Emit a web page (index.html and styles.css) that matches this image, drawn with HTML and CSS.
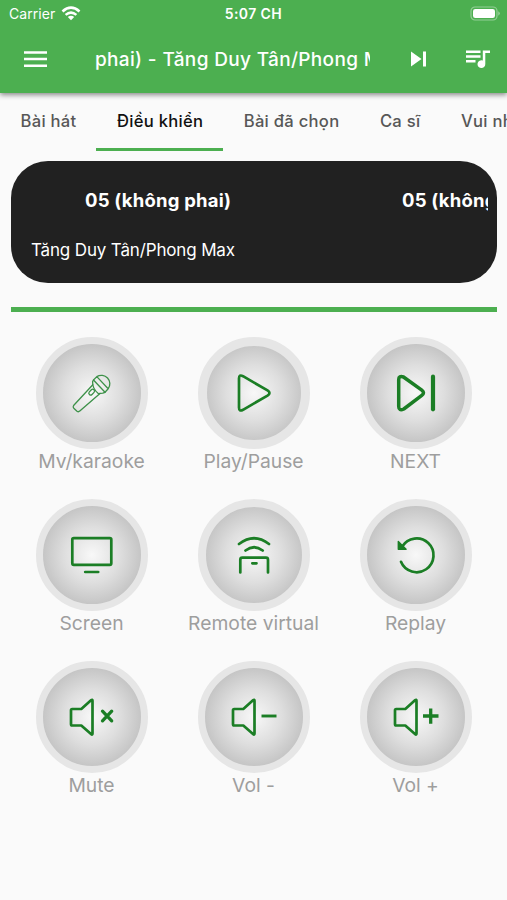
FILE: index.html
```
<!DOCTYPE html>
<html lang="vi">
<head>
    <meta charset="UTF-8">
    <title>Karaoke</title>
    <link rel="stylesheet" href="styles.css">
</head>
<body>
    <header class="header">
        <div class="status">
            <div class="carrier">
                <span>Carrier</span>
                <svg width="20" height="15" viewBox="0 0 20 15">
                    <path d="M1.5 5.4Q10 -2 18.5 5.4" fill="none" stroke="#fff" stroke-width="2.7"/>
                    <path d="M4.6 8.9Q10 4.3 15.4 8.9" fill="none" stroke="#fff" stroke-width="2.5"/>
                    <path d="M6.8 11Q10 8.4 13.2 11L10 14.3Z" fill="#fff"/>
                </svg>
            </div>
            <div class="clock">5:07 CH</div>
            <svg class="battery" width="31" height="15" viewBox="0 0 31 15">
                <rect x="1" y="1" width="26" height="13" rx="4" fill="none" stroke="#fff" stroke-opacity=".4" stroke-width="1.2"/>
                <rect x="3" y="3" width="22" height="9" rx="2.3" fill="#fff"/>
                <path d="M28.3 5.3Q31.3 7.5 28.3 9.7Z" fill="#fff" fill-opacity=".45"/>
            </svg>
        </div>
        <div class="toolbar">
            <svg class="menu" width="24" height="18" viewBox="0 0 24 18">
                <path d="M0 2.4H23M0 9H23M0 15.7H23" stroke="#fff" stroke-width="2.5"/>
            </svg>
            <div class="title">phai) - Tăng Duy Tân/Phong Max</div>
            <svg class="skip" width="18" height="18" viewBox="0 0 18 18">
                <path d="M1 1.6V16.4L11.5 9ZM13 1.6H16V16.4H13Z" fill="#fff"/>
            </svg>
            <svg class="queue" width="26" height="20" viewBox="0 0 26 20">
                <path d="M1 2.7H15.5M1 7.5H15.5M1 12.2H10.5" stroke="#fff" stroke-width="2.4"/>
                <path d="M17.8 1.4H25V3.9H20.3V15A3.9 3.9 0 1 1 17.8 11.5Z" fill="#fff"/>
            </svg>
        </div>
    </header>

    <nav class="tabs">
        <a class="tab">Bài hát</a>
        <a class="tab active">Điều khiển</a>
        <a class="tab">Bài đã chọn</a>
        <a class="tab">Ca sĩ</a>
        <a class="tab">Vui nhộn</a>
    </nav>

    <section class="now-playing">
        <div class="song"><span>05 (không phai)</span><span>05 (không phai)</span></div>
        <div class="artist">Tăng Duy Tân/Phong Max</div>
    </section>
    <div class="progress"></div>

    <main class="remote">
        <div class="control">
            <div class="button">
                <svg class="thin" viewBox="0 0 112 112">
                    <path d="M56.8 47.7L37.6 68.5Q36.6 70 37.8 71.2L41 74.2Q42.4 75.3 43.8 74.1L64 56.5"/>
                    <path d="M57.5 43L56.6 44.6Q56.2 51.5 62.5 56.7L66.8 56.2L69 55.3"/>
                    <path d="M57.5 43L60.8 39.6A8.5 8.5 0 0 1 72.2 51.8L69 55.3ZM60.8 39.6L72.2 51.8"/>
                    <rect x="52.5" y="53.3" width="6.5" height="3.7" rx="1.8" transform="rotate(-46 55.7 55.2)"/>
                </svg>
            </div>
            <p>Mv/karaoke</p>
        </div>
        <div class="control">
            <div class="button small">
                <svg viewBox="0 0 112 112">
                    <path d="M41 41.5Q41 37 45 39.2L69.5 53.4Q73.5 56 69.5 58.6L45 72.8Q41 75 41 70.5Z"/>
                </svg>
            </div>
            <p>Play/Pause</p>
        </div>
        <div class="control">
            <div class="button">
                <svg class="thick" viewBox="0 0 112 112">
                    <path d="M38.7 42.5Q38.7 38.5 43.5 40L61.8 53.2Q65.2 55.8 61.8 58.4L43.8 72Q38.7 74.2 38.7 69.5Z"/>
                    <path class="bar" d="M73 39.7V72.3"/>
                </svg>
            </div>
            <p>NEXT</p>
        </div>

        <div class="control">
            <div class="button">
                <svg viewBox="0 0 112 112">
                    <rect x="36.3" y="39.2" width="39" height="26.6" rx="1.5"/>
                    <path d="M49.2 73H62.2"/>
                </svg>
            </div>
            <p>Screen</p>
        </div>
        <div class="control">
            <div class="button medium">
                <svg viewBox="0 0 112 112">
                    <path d="M41 45Q56 33.5 71 45M47.5 51.5Q56 45 64.7 51.5"/>
                    <path d="M42.3 73.5V60.7Q42.3 58.7 44.3 58.7H68Q70 58.7 70 60.7V73.5M54.3 64.3H58.5"/>
                </svg>
            </div>
            <p>Remote virtual</p>
        </div>
        <div class="control">
            <div class="button">
                <svg viewBox="0 0 112 112">
                    <path d="M42.2 47.5A16.9 16.9 0 1 1 41 62.8"/>
                    <path class="fill" d="M38.3 42.5V50.3H46.1Z"/>
                </svg>
            </div>
            <p>Replay</p>
        </div>

        <div class="control">
            <div class="button">
                <svg viewBox="0 0 112 112">
                    <path d="M35 49.2Q35 48 36.2 48H45.3L55 39.3Q56.5 38 56.5 39.8V72.5Q56.5 74.3 55 73L45.3 64.5H36.2Q35 64.5 35 63.3Z"/>
                    <path class="cross" d="M66.5 50.2L75.7 59.8M75.7 50.2L66.5 59.8"/>
                </svg>
            </div>
            <p>Mute</p>
        </div>
        <div class="control">
            <div class="button">
                <svg viewBox="0 0 112 112">
                    <path d="M35 49.2Q35 48 36.2 48H45.3L55 39.3Q56.5 38 56.5 39.8V72.5Q56.5 74.3 55 73L45.3 64.5H36.2Q35 64.5 35 63.3Z"/>
                    <path class="flat" d="M63.5 55H78.5"/>
                </svg>
            </div>
            <p>Vol -</p>
        </div>
        <div class="control">
            <div class="button">
                <svg viewBox="0 0 112 112">
                    <path d="M35 49.2Q35 48 36.2 48H45.3L55 39.3Q56.5 38 56.5 39.8V72.5Q56.5 74.3 55 73L45.3 64.5H36.2Q35 64.5 35 63.3Z"/>
                    <path class="flat plus" d="M63 55H78.5M70.7 47.5V62.7"/>
                </svg>
            </div>
            <p>Vol +</p>
        </div>
    </main>
</body>
</html>
```

FILE: styles.css
```
* {
    box-sizing: border-box;
}
body {
    margin: 0;
    height: 900px;
    overflow: hidden;
    background-color: #fafafa;
    font-family: 'Inter', 'Roboto', sans-serif;
}
.header {
    position: relative;
    height: 93px;
    background-color: #4caf50;
    color: white;
    box-shadow: 0 2px 5px rgba(0, 0, 0, 0.45);
}
.status {
    display: grid;
    grid-template-columns: 1fr auto 1fr;
    align-items: center;
    height: 27px;
    padding: 0 6px 0 9px;
    font-size: 14px;
}
.carrier {
    display: flex;
    align-items: center;
    gap: 6px;
    letter-spacing: 0.05px;
}
.clock {
    margin-left: -3px;
    font-weight: 600;
    letter-spacing: 0.4px;
}
.battery {
    justify-self: end;
}
.toolbar {
    display: flex;
    align-items: center;
    height: 64px;
    padding-left: 24px;
}
.title {
    width: 275px;
    margin-left: 47px;
    overflow: hidden;
    white-space: nowrap;
    font-size: 19px;
    font-weight: 500;
    letter-spacing: 0.34px;
}
.skip {
    margin-left: 40px;
}
.queue {
    margin-left: 37px;
}
.tabs {
    display: flex;
    height: 58px;
    overflow: hidden;
}
.tab {
    flex-shrink: 0;
    padding: 16px 20px 0 20.5px;
    border-bottom: 3px solid transparent;
    white-space: nowrap;
    font-size: 16.6px;
    font-weight: 500;
    line-height: 24px;
    letter-spacing: 0.28px;
    color: #575757;
}
.tab.active {
    color: #111;
    border-color: #4caf50;
}
.now-playing {
    height: 122px;
    margin: 10px 10px 0 11px;
    padding: 25px 9px 0 20px;
    border-radius: 37px;
    background-color: #212121;
    color: white;
}
.song {
    display: flex;
    gap: 171px;
    padding-left: 54px;
    overflow: hidden;
    white-space: nowrap;
    font-size: 18.5px;
    font-weight: 700;
    line-height: 28px;
    letter-spacing: 0.2px;
}
.artist {
    margin-top: 24px;
    font-size: 17px;
    line-height: 24px;
    letter-spacing: -0.15px;
}
.progress {
    height: 5px;
    margin: 24px 10px 0 11px;
    background-color: #4caf50;
}
.remote {
    display: grid;
    grid-template-columns: repeat(3, 162px);
    grid-auto-rows: 162px;
    margin: 25px 0 0 11px;
}
.control {
    display: flex;
    flex-direction: column;
    align-items: center;
}
.control p {
    margin: 0 1px 0 0;
    font-size: 19.3px;
    line-height: 24px;
    color: #9e9e9e;
    white-space: nowrap;
}
.button {
    width: 112px;
    height: 112px;
    border: 7px solid #e6e6e6;
    border-radius: 50%;
    background: radial-gradient(circle closest-side, #f8f8f8, #dedede 50%, #bdbdbd) border-box;
}
.button.small {
    border-width: 9px;
}
.button.medium {
    border-width: 8px;
}
.button svg {
    display: block;
    width: 112px;
    height: 112px;
    margin: -7px;
    fill: none;
    stroke: #1b7e25;
    stroke-width: 2.7;
    stroke-linecap: round;
    stroke-linejoin: round;
}
.button.small svg {
    margin: -9px;
}
.button.medium svg {
    margin: -8px;
}
.button svg.thin {
    stroke: #3d9149;
    stroke-width: 1.3;
}
.button svg.thick {
    stroke-width: 3.5;
}
.button .bar {
    stroke-width: 4.2;
}
.button .fill {
    fill: #1b7e25;
    stroke-width: 1.4;
}
.button .cross {
    stroke-width: 3.3;
}
.button .flat {
    stroke-linecap: butt;
    stroke-width: 2.9;
}
.button .plus {
    stroke-width: 3.3;
}
```
